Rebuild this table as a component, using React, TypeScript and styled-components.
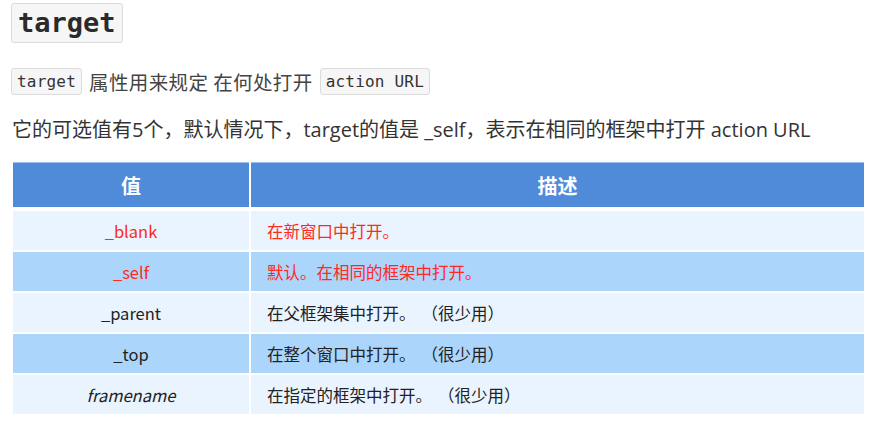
import React from "react";
import styled, { createGlobalStyle } from "styled-components";

const GlobalStyle = createGlobalStyle`
  body {
    margin: 0;
    background: #ffffff;
    font-family: "Open Sans", "Noto Sans CJK SC", sans-serif;
    color: #333333;
  }
`;

const Page = styled.div`
  padding: 3px 10px 0 11px;
`;

const Code = styled.code`
  display: inline-block;
  font-family: "DejaVu Sans Mono", "Liberation Mono", monospace;
  background: #f6f6f6;
  border: 1px solid #dcdcdc;
  border-radius: 3px;
  color: #333;
`;

const Title = styled.h1`
  margin: 0;
  display: flex;
  ${Code} {
    font-size: 27px;
    font-weight: bold;
    line-height: 38px;
    padding: 0 6px 0 6px;
    color: #2a2a2a;
  }
`;

const Intro = styled.p`
  margin: 25px 0 0;
  display: flex;
  align-items: center;
  gap: 7px;
  font-size: 19.5px;
  letter-spacing: 0.4px;
  line-height: 27px;
  color: #444;
  font-family: "Noto Sans CJK SC", serif;
  ${Code} {
    font-size: 16px;
    letter-spacing: 0.2px;
    line-height: 25px;
    padding: 0 5px;
  }
`;

const Note = styled.p`
  margin: 23px 0 0 1px;
  font-size: 20px;
  line-height: 24px;
  color: #333;
`;

const Table = styled.div`
  margin: 20px 0 0 2px;
  width: 851px;
  display: grid;
  grid-template-columns: 236px 1fr;
  column-gap: 2px;
  row-gap: 2px;
  font-family: "Noto Sans CJK SC", sans-serif;
  font-size: 16.5px;
  text-spacing-trim: space-all;
`;

const HeadCell = styled.div`
  background: #4f8bd9;
  border-top: 1px solid #9cc0ee;
  color: #ffffff;
  font-weight: bold;
  font-size: 20px;
  height: 44px;
  display: flex;
  align-items: center;
  justify-content: center;
  margin-bottom: 2px;
`;

const Cell = styled.div<{ $alt?: boolean; $red?: boolean; $center?: boolean; $italic?: boolean }>`
  background: ${(p) => (p.$alt ? "#acd5fc" : "#eaf4fe")};
  color: ${(p) => (p.$red ? "#ff2a1a" : "#222")};
  font-style: ${(p) => (p.$italic ? "italic" : "normal")};
  height: 39px;
  display: flex;
  align-items: center;
  justify-content: ${(p) => (p.$center ? "center" : "flex-start")};
  padding-left: ${(p) => (p.$center ? "0" : "16px")};
`;

const Aside = styled.span`
  margin-left: 6px;
`;

const rows = [
  { value: "_blank", desc: "在新窗口中打开。", red: true },
  { value: "_self", desc: "默认。在相同的框架中打开。", red: true },
  { value: "_parent", desc: "在父框架集中打开。", note: true },
  { value: "_top", desc: "在整个窗口中打开。", note: true },
  { value: "framename", desc: "在指定的框架中打开。", note: true, italic: true },
];

export default function App() {
  return (
    <Page>
      <GlobalStyle />
      <Title>
        <Code>target</Code>
      </Title>
      <Intro>
        <Code>target</Code>
        <span>属性用来规定 在何处打开</span>
        <Code>action URL</Code>
      </Intro>
      <Note>
        它的可选值有5个，默认情况下，target的值是 _self，表示在相同的框架中打开 action URL
      </Note>
      <Table>
        <HeadCell>值</HeadCell>
        <HeadCell>描述</HeadCell>
        {rows.map((r, i) => (
          <React.Fragment key={r.value}>
            <Cell $alt={i % 2 === 1} $red={r.red} $center $italic={r.italic}>
              {r.value}
            </Cell>
            <Cell $alt={i % 2 === 1} $red={r.red}>
              {r.desc}
              {r.note && <Aside>（很少用）</Aside>}
            </Cell>
          </React.Fragment>
        ))}
      </Table>
    </Page>
  );
}
